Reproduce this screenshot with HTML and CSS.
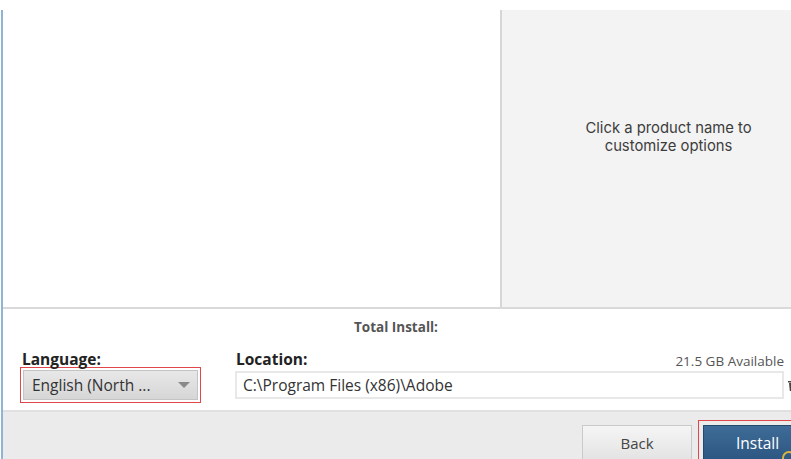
FILE: index.html
```html
<!DOCTYPE html>
<html>
<head>
<meta charset="utf-8">
<link rel="stylesheet" href="styles.css">
</head>
<body>
<div class="app">
  <div class="main">
    <div class="list"></div>
    <div class="detail">
      <div class="detail-line">Click a product name to</div>
      <div class="detail-line">customize options</div>
    </div>
  </div>
  <div class="options">
    <div class="total">Total Install:</div>
    <div class="fields">
      <div class="field lang">
        <div class="label">Language:</div>
        <div class="highlight">
          <div class="select">
            <span class="select-text">English (North ...</span>
            <span class="arrow"></span>
          </div>
        </div>
      </div>
      <div class="field loc">
        <div class="loc-head">
          <span class="label">Location:</span>
          <span class="avail">21.5 GB Available</span>
        </div>
        <div class="loc-row">
          <div class="input">C:\Program Files (x86)\Adobe</div>
          <svg class="folder" width="14" height="14" viewBox="0 0 14 14">
            <path d="M2 3h10v1.5H2z M5 1.5h4V3H5z" fill="#444"/>
            <path d="M3 5h8l-0.8 8H3.8z" fill="#444"/>
          </svg>
        </div>
      </div>
    </div>
  </div>
  <div class="footer">
    <button class="btn back">Back</button>
    <div class="highlight install-wrap">
      <button class="btn install">Install<span class="busy"></span></button>
    </div>
  </div>
</div>
</body>
</html>
```
FILE: styles.css
```css
html, body {
  margin: 0;
  padding: 0;
  background: #fff;
  overflow: hidden;
}
body {
  width: 791px;
  height: 459px;
  font-family: "Open Sans", "Noto Sans", sans-serif;
  color: #333;
}
.app {
  margin: 10px 0 0 1px;
  width: 788px;
  height: 449px;
  border-left: 2px solid #8fb4d6;
  display: flex;
  flex-direction: column;
  overflow: hidden;
}
.main {
  height: 297px;
  display: flex;
  flex-shrink: 0;
  border-bottom: 2px solid #d9d9d9;
}
.list {
  width: 497px;
  flex-shrink: 0;
  background: #fff;
}
.detail {
  flex: 1;
  border-left: 2px solid #d6d6d6;
  background: #f3f3f3;
  padding-top: 109px;
  padding-left: 44px;
  text-align: center;
  font-family: Inter, "Open Sans", sans-serif;
  font-size: 14.8px;
  color: #3c3c3c;
}
.detail-line {
  height: 18px;
  line-height: 18px;
}
.options {
  height: 103px;
  flex-shrink: 0;
  box-sizing: border-box;
  padding: 9px 0 0 17px;
  border-bottom: 2px solid #e0e0e0;
}
.total {
  font-size: 13.5px;
  font-weight: bold;
  line-height: 18px;
  color: #555;
  text-align: center;
  width: 752px;
}
.fields {
  margin-top: 16px;
  display: flex;
  gap: 34px;
}
.field.lang {
  width: 181px;
  flex-shrink: 0;
}
.label {
  font-size: 15.5px;
  font-weight: bold;
  line-height: 15px;
  color: #222;
  display: block;
  padding-left: 2px;
}
.highlight {
  border: 1px solid #e0474c;
  padding: 2px;
}
.select {
  height: 28px;
  border: 1px solid #c4c4c4;
  background: linear-gradient(#e8e8e8, #d6d6d6);
  display: flex;
  align-items: center;
  justify-content: space-between;
  padding: 0 7px 0 8px;
}
.select-text {
  font-size: 15.5px;
  color: #333;
}
.arrow {
  width: 0;
  height: 0;
  border-left: 6px solid transparent;
  border-right: 6px solid transparent;
  border-top: 6px solid #8a8a8a;
}
.field.loc {
  width: 556px;
  flex-shrink: 0;
}
.loc-head {
  display: flex;
  justify-content: space-between;
  align-items: flex-end;
  width: 549px;
}
.loc-head .label {
  padding-left: 1px;
}
.avail {
  font-size: 13.5px;
  line-height: 15px;
  color: #555;
  position: relative;
  top: 2px;
}
.loc-row {
  display: flex;
  align-items: center;
  margin-top: 4px;
}
.input {
  width: 549px;
  flex-shrink: 0;
  height: 28px;
  box-sizing: border-box;
  border: 2px solid #e8e8e8;
  background: #fff;
  font-size: 15.5px;
  line-height: 24px;
  padding-left: 6px;
  color: #333;
}
.folder {
  margin-left: 2px;
  flex-shrink: 0;
}
.footer {
  flex: 1;
  background: #ebebeb;
  display: flex;
  align-items: flex-start;
  gap: 6px;
  padding: 8px 0 0 579px;
}
.btn {
  font-family: "Open Sans", "Noto Sans", sans-serif;
  font-size: 15px;
  height: 36px;
  width: 110px;
  padding: 0;
  flex-shrink: 0;
  cursor: pointer;
}
.back {
  margin-top: 5px;
  border: 1px solid #cacaca;
  background: linear-gradient(#f5f5f5, #e3e3e3);
  color: #444;
}
.install-wrap {
  padding: 4px;
  flex-shrink: 0;
}
.install {
  display: block;
  position: relative;
  border: 1px solid #24496f;
  background: linear-gradient(#3e6b97, #2c5782);
  color: #fff;
  text-align: left;
  padding-left: 32px;
  font-size: 15.5px;
}
.busy {
  position: absolute;
  left: 78px;
  top: 25px;
  width: 10px;
  height: 10px;
  border: 2px solid #d8b442;
  border-radius: 50%;
}
```
